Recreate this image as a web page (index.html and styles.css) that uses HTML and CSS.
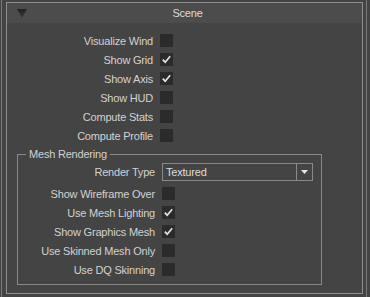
FILE: index.html
```html
<!DOCTYPE html>
<html lang="en">
<head>
    <meta charset="UTF-8">
    <title>Scene</title>
    <link rel="stylesheet" href="styles.css">
</head>
<body>
    <div class="frame">
        <div class="panel">
            <div class="panel-header">
                <svg class="collapse-arrow" width="10" height="9" viewBox="0 0 10 9">
                    <defs>
                        <linearGradient id="arrowGrad" x1="0" y1="0" x2="0" y2="1">
                            <stop offset="0" stop-color="#222"/>
                            <stop offset="1" stop-color="#3a3a3a"/>
                        </linearGradient>
                    </defs>
                    <polygon points="0,0 10,0 5,9" fill="url(#arrowGrad)"/>
                </svg>
                <span class="panel-title">Scene</span>
            </div>

            <div class="panel-body">
                <div class="row">
                    <span class="label">Visualize Wind</span>
                    <span class="checkbox"></span>
                </div>
                <div class="row">
                    <span class="label">Show Grid</span>
                    <span class="checkbox checked"><svg viewBox="0 0 13 13"><path d="M2.8 6.6 L5.2 9.2 L10.2 3.2"/></svg></span>
                </div>
                <div class="row">
                    <span class="label">Show Axis</span>
                    <span class="checkbox checked"><svg viewBox="0 0 13 13"><path d="M2.8 6.6 L5.2 9.2 L10.2 3.2"/></svg></span>
                </div>
                <div class="row">
                    <span class="label">Show HUD</span>
                    <span class="checkbox"></span>
                </div>
                <div class="row">
                    <span class="label">Compute Stats</span>
                    <span class="checkbox"></span>
                </div>
                <div class="row">
                    <span class="label">Compute Profile</span>
                    <span class="checkbox"></span>
                </div>

                <div class="group">
                    <div class="group-title">Mesh Rendering</div>
                    <div class="row row-select">
                        <span class="label">Render Type</span>
                        <div class="select">
                            <span class="select-value">Textured</span>
                            <span class="select-button">
                                <svg width="7" height="4" viewBox="0 0 7 4"><polygon points="0,0 7,0 3.5,4" fill="#e6e6e6"/></svg>
                            </span>
                        </div>
                    </div>
                    <div class="row">
                        <span class="label">Show Wireframe Over</span>
                        <span class="checkbox"></span>
                    </div>
                    <div class="row">
                        <span class="label">Use Mesh Lighting</span>
                        <span class="checkbox checked"><svg viewBox="0 0 13 13"><path d="M2.8 6.6 L5.2 9.2 L10.2 3.2"/></svg></span>
                    </div>
                    <div class="row">
                        <span class="label">Show Graphics Mesh</span>
                        <span class="checkbox checked"><svg viewBox="0 0 13 13"><path d="M2.8 6.6 L5.2 9.2 L10.2 3.2"/></svg></span>
                    </div>
                    <div class="row">
                        <span class="label">Use Skinned Mesh Only</span>
                        <span class="checkbox"></span>
                    </div>
                    <div class="row">
                        <span class="label">Use DQ Skinning</span>
                        <span class="checkbox"></span>
                    </div>
                </div>
            </div>
        </div>
    </div>
</body>
</html>
```

FILE: styles.css
```css
* {
    margin: 0;
    padding: 0;
    box-sizing: border-box;
}

body {
    background: #444444;
    font-family: "Liberation Sans", Arial, sans-serif;
    font-size: 11px;
    color: #d2d2d2;
    width: 370px;
    height: 297px;
    overflow: hidden;
}

.frame {
    margin: 0 3px 0 1px;
    height: 297px;
    padding: 2px 3px 0 4px;
    border-left: 1px solid #7a7a7a;
    border-right: 1px solid #7a7a7a;
}

.panel {
    height: 292px;
    border: 1px solid #8e8e8e;
    background: #444444;
}

.panel-header {
    height: 20px;
    background: #4c4c4c;
    display: flex;
    align-items: center;
}

.collapse-arrow {
    margin-left: 10px;
    margin-top: 1px;
}

.panel-title {
    flex: 1;
    text-align: center;
    color: #dcdcdc;
    padding-right: 14px;
    letter-spacing: -0.2px;
}

.panel-body {
    padding-top: 8px;
}

.row {
    display: flex;
    align-items: center;
    height: 19px;
}

.label {
    width: 146px;
    margin-right: 7px;
    text-align: right;
    white-space: nowrap;
    letter-spacing: -0.2px;
}

.checkbox {
    width: 13px;
    height: 13px;
    background: #2b2b2b;
    display: flex;
}

.checkbox svg {
    width: 13px;
    height: 13px;
}

.checkbox svg path {
    fill: none;
    stroke: #e4e4e4;
    stroke-width: 1.7;
}

/* group box with the title sitting on its top border */
.group {
    margin: 9px 40px 0 10px;
    border: 1px solid #8a8a8a;
    padding-bottom: 5px;
}

.group-title {
    width: fit-content;
    margin: -8px 0 0 8px;
    padding: 0 3px;
    line-height: 14px;
    background: #444444;
    letter-spacing: -0.2px;
}

.group .label {
    width: 137px;
}

.row-select {
    margin-top: 2px;
    height: 21px;
    align-items: flex-start;
}

.row-select .label {
    line-height: 18px;
}

.select {
    width: 151px;
    height: 18px;
    border: 1px solid #8a8a8a;
    display: flex;
}

.select-value {
    flex: 1;
    padding-left: 3px;
    line-height: 16px;
    color: #dcdcdc;
    letter-spacing: -0.2px;
}

.select-button {
    width: 16px;
    border-left: 1px solid #8a8a8a;
    display: flex;
    align-items: center;
    justify-content: center;
}
```
